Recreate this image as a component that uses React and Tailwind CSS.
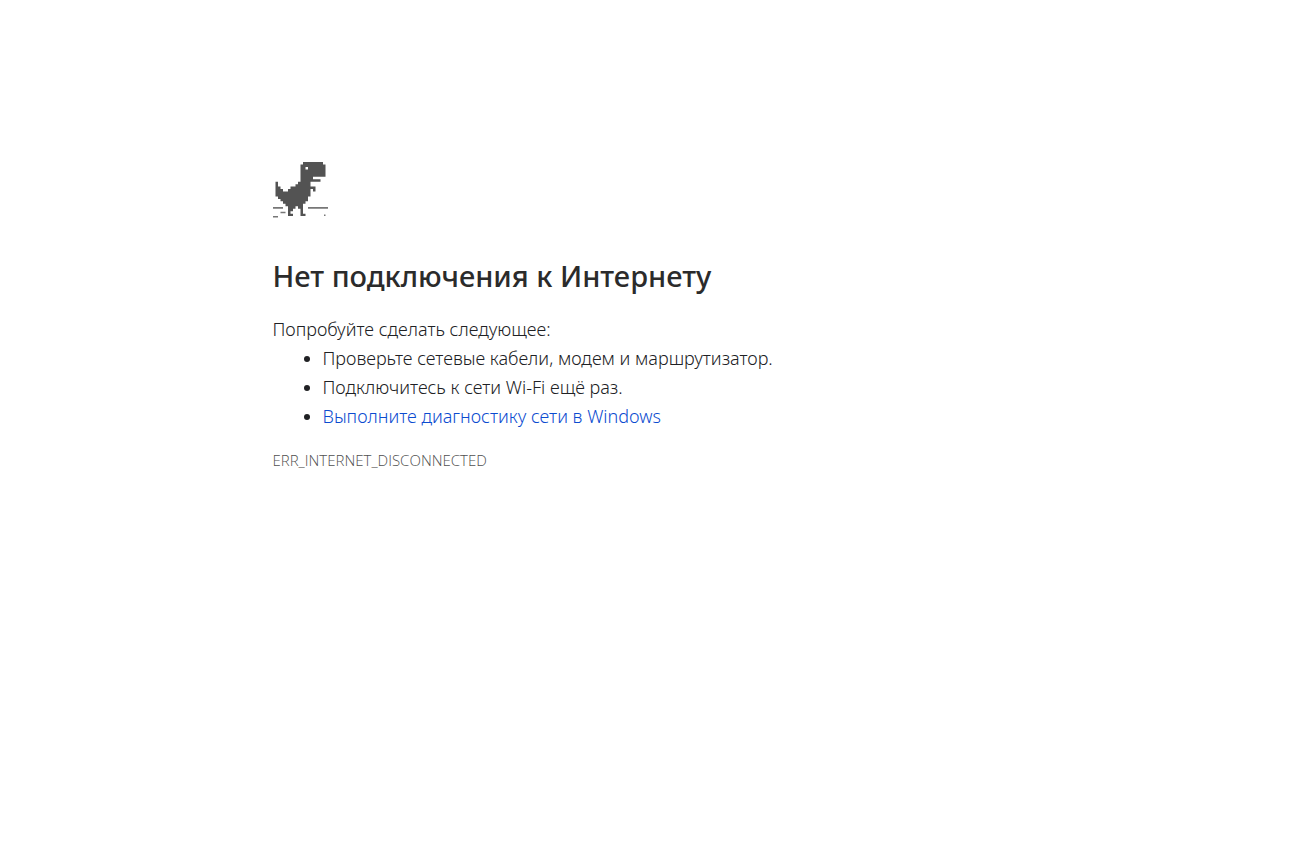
// Each row lists the filled runs of the sprite as [first cell, cell count].
const DINO = [
  [[11, 8]],
  [[10, 10]],
  [[10, 2], [13, 7]],
  [[10, 10]],
  [[10, 10]],
  [[10, 10]],
  [[10, 5]],
  [[10, 8]],
  [[0, 1], [9, 5]],
  [[0, 1], [8, 6]],
  [[0, 2], [6, 10]],
  [[0, 3], [5, 9], [15, 1]],
  [[0, 14]],
  [[0, 14]],
  [[1, 12]],
  [[2, 11]],
  [[3, 9]],
  [[4, 7]],
  [[5, 3], [9, 2]],
  [[5, 2], [10, 1]],
  [[5, 1], [10, 1]],
  [[5, 2], [10, 2]],
];

function DinoIcon() {
  const d = DINO.map((runs, y) =>
    runs.map(([x, w]) => `M${x} ${y}h${w}v1h${-w}z`).join("")
  ).join("");
  return (
    <svg className="block h-14 w-14 overflow-visible" viewBox="0 0 56 56" aria-hidden="true">
      <path transform="translate(2.5 1) scale(2.5 2.46)" fill="#535353" d={d} />
      <path
        fill="#777777"
        d="M0 46h10v1.7H0zM35 46h20v1.7H35zM7.5 50.7h5v1.5h-5zM0 55h5v1.5H0zM51 53.5h1.5v1.5H51z"
      />
    </svg>
  );
}

export default function App() {
  return (
    <main className="mx-auto max-w-[750px] pt-[161px] font-['Noto_Sans','Open_Sans',sans-serif] text-lg leading-[29px] font-light text-[#202124]">
      <DinoIcon />
      <h1 className="mt-10 text-[29px] leading-[38px] font-medium text-[#2b2b2b]">
        Нет подключения к Интернету
      </h1>
      <p className="mt-5">Попробуйте сделать следующее:</p>
      <ul className="list-disc pl-[50px]">
        <li>Проверьте сетевые кабели, модем и маршрутизатор.</li>
        <li>Подключитесь к сети Wi-Fi ещё раз.</li>
        <li>
          <a href="#diagnostics" className="text-[#0b4bd0]">Выполните диагностику сети в Windows</a>
        </li>
      </ul>
      <p className="mt-4 font-['Open_Sans','Noto_Sans',sans-serif] text-[15px] leading-[26px] text-[#505050]">
        ERR_INTERNET_DISCONNECTED
      </p>
    </main>
  );
}
